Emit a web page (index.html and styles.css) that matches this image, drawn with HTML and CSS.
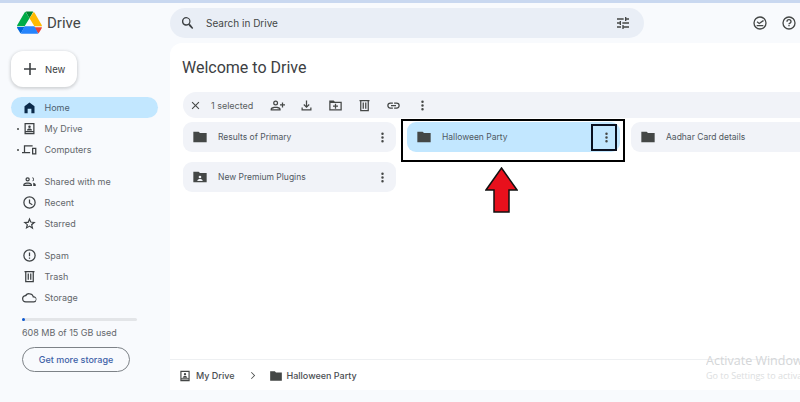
FILE: index.html
```html
<!DOCTYPE html>
<html lang="en">
<head>
<meta charset="utf-8">
<title>Drive</title>
<link rel="stylesheet" href="styles.css">
</head>
<body>
<div class="strip"></div>
<div class="app">
  <aside class="side">
    <div class="brand">
      <svg class="logo" viewBox="0 0 24 22" width="25" height="23">
        <path fill="#0066da" d="M1.8 18.9l1 1.8c.2.4.5.7.9.9l3.6-6.2H0c0 .4.1.8.3 1.2z"/>
        <path fill="#00ac47" d="M12 7L8.2.6c-.4.2-.7.5-.9.9L.3 13.3c-.2.4-.3.8-.3 1.2h7.3z"/>
        <path fill="#ea4335" d="M20.3 21.6c.4-.2.7-.5.9-.9l.4-.7 2-3.3c.2-.4.3-.8.3-1.2h-7.3l1.6 3z"/>
        <path fill="#00832d" d="M12 7l3.6-6.400c-.4-.2-.8-.2-1.200-.2H9.600c-.4 0-.8.100-1.200.2z"/>
        <path fill="#2684fc" d="M16.700 14.500H7.300l-3.600 7.100c.4.200.8.200 1.200.2h14.200c.4 0 .8-.1 1.200-.2z"/>
        <path fill="#ffba00" d="M20.200 7.500l-3.300-5.800c-.2-.4-.5-.7-.9-.9L12 7l4.700 7.500H24c0-.4-.1-.8-.3-1.200z"/>
      </svg>
      <span class="brand-name">Drive</span>
    </div>
    <button class="new-btn">
      <svg class="ic-plus" viewBox="0 0 12 12" width="12" height="12"><path d="M5.200 0h1.600v5.200H12v1.600H6.800V12H5.200V6.800H0V5.200h5.200z"/></svg>
      <span>New</span>
    </button>
    <nav class="nav">
      <a class="nav-item active"><svg class="ic" viewBox="0 0 24 24"><path d="M4 21V10l8-6 8 6v11h-5v-7H9v7z"/></svg><span>Home</span></a>
      <a class="nav-item"><i class="dot"></i><svg class="ic" viewBox="0 0 24 24"><path fill-rule="evenodd" d="M4 3h16v18H4zm2 2v11h12V5zm0 13v1h12v-1zM12 7a2 2 0 110 4 2 2 0 010-4zM8 15c0-2 2-3 4-3s4 1 4 3z"/></svg><span>My Drive</span></a>
      <a class="nav-item"><i class="dot"></i><svg class="ic" viewBox="0 0 24 24"><path fill-rule="evenodd" d="M3 5h14v2H5v9h8v2H0v-2h3zM16 9h7v11h-7zm2 2v7h3v-7z"/></svg><span>Computers</span></a>
      <div class="nav-gap"></div>
      <a class="nav-item"><svg class="ic" viewBox="0 0 24 24"><path fill-rule="evenodd" d="M9 5a3.500 3.500 0 110 7 3.500 3.500 0 010-7zm0 2a1.500 1.500 0 100 3 1.500 1.500 0 000-3zM2 19v-2c0-2.500 4-3.500 7-3.500s7 1 7 3.500v2zm2-2h10c-.3-1-3-1.500-5-1.500S4.300 16 4 17zM16 5a3.500 3.500 0 011 6.800V10a1.500 1.500 0 000-2.900zM18 14c2 .4 4 1.300 4 3v2h-4v-2c0-1.100-.2-2.100 0-3z"/></svg><span>Shared with me</span></a>
      <a class="nav-item"><svg class="ic" viewBox="0 0 24 24"><path fill-rule="evenodd" d="M12 2a10 10 0 110 20 10 10 0 010-20zm0 2a8 8 0 100 16 8 8 0 000-16zm-1 3h2v5.200l4 2.400-1 1.700-5-3z"/></svg><span>Recent</span></a>
      <a class="nav-item"><svg class="ic" viewBox="0 0 24 24"><path fill-rule="evenodd" d="M12 2.500l2.800 6.600 7.200.6-5.500 4.700 1.700 7L12 17l-6.200 3.900 1.700-7L2 9.700l7.200-.6zm0 5l-1.500 3.500-3.800.3 2.900 2.500-.9 3.700L12 15l3.300 2-.9-3.700 2.900-2.500-3.800-.3z"/></svg><span>Starred</span></a>
      <div class="nav-gap"></div>
      <a class="nav-item"><svg class="ic" viewBox="0 0 24 24"><path fill-rule="evenodd" d="M12 2a10 10 0 110 20 10 10 0 010-20zm0 2a8 8 0 100 16 8 8 0 000-16zm-1 3h2v6h-2zm0 8h2v2h-2z"/></svg><span>Spam</span></a>
      <a class="nav-item"><svg class="ic" viewBox="0 0 24 24"><path fill-rule="evenodd" d="M4 3h16v2h-1v16H5V5H4zm3 2v14h10V5zm2 2h2v10H9zm4 0h2v10h-2z"/></svg><span>Trash</span></a>
      <a class="nav-item"><svg class="ic" viewBox="0 0 24 24"><path fill-rule="evenodd" d="M12 5a7 7 0 016.700 5.100A5 5 0 0119 20H6a6 6 0 01-1-11.900A7.500 7.500 0 0112 5zm0 2a5.500 5.500 0 00-5.400 3H6a4 4 0 000 8h13a3 3 0 00.200-6h-2C17 9 15 7 12 7z"/></svg><span>Storage</span></a>
    </nav>
    <div class="quota"><div class="quota-fill"></div></div>
    <p class="quota-text">608 MB of 15 GB used</p>
    <button class="more-btn">Get more storage</button>
  </aside>
  <div class="col">
    <header class="top">
      <div class="search">
        <svg class="ic-search" viewBox="0 0 24 24"><path d="M15.500 14h-.800l-.300-.300A6.500 6.500 0 1013 15l.3.300v.8l5 5 1.500-1.500zm-6 0a4.500 4.500 0 110-9 4.500 4.500 0 010 9z"/></svg>
        <span class="search-text">Search in Drive</span>
        <svg class="ic-tune" viewBox="0 0 24 24"><path d="M3 17v2h6v-2zM3 5v2h10V5zm10 16v-2h8v-2h-8v-2h-2v6zM7 9v2H3v2h4v2h2V9zm14 4v-2H11v2zm-6-4h2V7h4V5h-4V3h-2z"/></svg>
      </div>
      <div class="top-icons">
        <svg class="ic-top" viewBox="0 0 24 24"><path fill-rule="evenodd" d="M12 2a10 10 0 110 20 10 10 0 010-20zm0 2a8 8 0 100 16 8 8 0 000-16zM7 15h10v2H7zm9.500-7.500L18 9l-7.200 5L7 11l1.300-1.500 2.500 2z"/></svg>
        <svg class="ic-top" viewBox="0 0 24 24"><path fill-rule="evenodd" d="M12 2a10 10 0 110 20 10 10 0 010-20zm0 2a8 8 0 100 16 8 8 0 000-16zm-1 11h2v2h-2zm1-9a4 4 0 014 4c0 2.500-3 2.800-3 4h-2c0-2.800 3-2.800 3-4a2 2 0 00-4 0H8a4 4 0 014-4z"/></svg>
      </div>
    </header>
    <main class="panel">
      <h1 class="title">Welcome to Drive</h1>
      <div class="toolbar">
        <svg class="tb tb-x" viewBox="0 0 24 24"><path d="M19 6.400L17.600 5 12 10.600 6.400 5 5 6.400 10.600 12 5 17.600 6.400 19 12 13.400 17.600 19 19 17.600 13.400 12z"/></svg>
        <span class="sel">1 selected</span>
        <svg class="tb" viewBox="0 0 24 24"><path fill-rule="evenodd" d="M9 4a4 4 0 110 8 4 4 0 010-8zm0 2a2 2 0 100 4 2 2 0 000-4zM1 20v-2.500C1 15 5.500 14 9 14s8 1 8 3.500V20zm2-2h12c-.2-1-3.500-2-6-2s-5.800 1-6 2zM19 7h2v3h3v2h-3v3h-2v-3h-3v-2h3z"/></svg>
        <svg class="tb" viewBox="0 0 24 24"><path d="M11 4h2v8.200l2.600-2.600L17 11l-5 5-5-5 1.400-1.400 2.600 2.600zM4 15h2v3h12v-3h2v5H4z"/></svg>
        <svg class="tb" viewBox="0 0 24 24"><path fill-rule="evenodd" d="M2 4h7l2 2h11v14H2zm2 4v10h16V8zm7 1h2v3h3v2h-3v3h-2v-3H8v-2h3z"/></svg>
        <svg class="tb" viewBox="0 0 24 24"><path fill-rule="evenodd" d="M4 3h16v2h-1v16H5V5H4zm3 2v14h10V5zm2 2h2v10H9zm4 0h2v10h-2z"/></svg>
        <svg class="tb" viewBox="0 0 24 24"><path d="M17 7h-4v2h4a3 3 0 010 6h-4v2h4a5 5 0 000-10zm-6 8H7a3 3 0 010-6h4V7H7a5 5 0 000 10h4zm-3-4h8v2H8z"/></svg>
        <svg class="tb" viewBox="0 0 24 24"><path d="M12 8a2 2 0 100-4 2 2 0 000 4zm0 2a2 2 0 100 4 2 2 0 000-4zm0 6a2 2 0 100 4 2 2 0 000-4z"/></svg>
      </div>
      <div class="grid">
        <div class="card">
          <svg class="folder" viewBox="0 0 24 24"><path d="M10 4H2v16h20V6H12z"/></svg>
          <span class="card-name">Results of Primary</span>
          <svg class="more" viewBox="0 0 24 24"><path d="M12 8a2 2 0 100-4 2 2 0 000 4zm0 2a2 2 0 100 4 2 2 0 000-4zm0 6a2 2 0 100 4 2 2 0 000-4z"/></svg>
        </div>
        <div class="card selected">
          <svg class="folder" viewBox="0 0 24 24"><path d="M10 4H2v16h20V6H12z"/></svg>
          <span class="card-name">Halloween Party</span>
          <svg class="more" viewBox="0 0 24 24"><path d="M12 8a2 2 0 100-4 2 2 0 000 4zm0 2a2 2 0 100 4 2 2 0 000-4zm0 6a2 2 0 100 4 2 2 0 000-4z"/></svg>
        </div>
        <div class="card">
          <svg class="folder" viewBox="0 0 24 24"><path d="M10 4H2v16h20V6H12z"/></svg>
          <span class="card-name">Aadhar Card details</span>
        </div>
        <div class="card">
          <svg class="folder" viewBox="0 0 24 24"><path fill-rule="evenodd" d="M10 4H2v16h20V6H12zm2 6a2 2 0 110 4 2 2 0 010-4zm-4 8c0-2 2-3 4-3s4 1 4 3z"/></svg>
          <span class="card-name">New Premium Plugins</span>
          <svg class="more" viewBox="0 0 24 24"><path d="M12 8a2 2 0 100-4 2 2 0 000 4zm0 2a2 2 0 100 4 2 2 0 000-4zm0 6a2 2 0 100 4 2 2 0 000-4z"/></svg>
        </div>
      </div>
      <div class="crumbs">
        <svg class="cr-ic" viewBox="0 0 24 24"><path fill-rule="evenodd" d="M4 3h16v18H4zm2 2v11h12V5zm0 13v1h12v-1zM12 7a2 2 0 110 4 2 2 0 010-4zM8 15c0-2 2-3 4-3s4 1 4 3z"/></svg>
        <span class="cr-text">My Drive</span>
        <svg class="cr-chev" viewBox="0 0 24 24"><path d="M8 4l1.500-1.500L19 12l-9.500 9.500L8 20l8-8z"/></svg>
        <svg class="cr-ic" viewBox="0 0 24 24"><path d="M10 4H2v16h20V6H12z"/></svg>
        <span class="cr-text">Halloween Party</span>
      </div>
    </main>
  </div>
</div>
<div class="mark-box"></div>
<div class="mark-small"></div>
<svg class="mark-arrow" viewBox="0 0 33 46" width="33" height="46"><path d="M16.500 1L32 23h-8v22H9V23H1z"/></svg>
<div class="watermark">
  <div class="wm-1">Activate Windows</div>
  <div class="wm-2">Go to Settings to activate Windows.</div>
</div>
</body>
</html>
```
FILE: styles.css
```css
* { box-sizing: border-box; }
html, body { margin: 0; height: 100%; }
body {
  width: 800px; height: 402px; overflow: hidden; position: relative;
  background: #f8fafd; color: #444746;
  font-family: "Inter", "Roboto", "Liberation Sans", sans-serif;
}
.strip { height: 3px; background: #c9d8f0; }
.app { display: flex; height: 399px; }

.side { width: 170px; flex: none; padding-left: 11px; display: flex; flex-direction: column; }
.brand { display: flex; align-items: center; height: 36px; padding: 3px 0 0 6px; gap: 5px; }
.logo { flex: none; }
.brand-name { font: 400 15px "Roboto", sans-serif; color: #444746; }
.new-btn {
  width: 66px; height: 36px; margin: 12px 0 0 0; padding: 0 0 0 13px;
  display: flex; align-items: center; gap: 9px;
  border: 0; border-radius: 12px; background: #fff;
  box-shadow: 0 1px 3px 1px rgba(60,64,67,.2);
  font: 400 9.500px "Inter", sans-serif; color: #3c4043;
}
.ic-plus { fill: #3c4043; flex: none; }
.nav { display: flex; flex-direction: column; margin-top: 10px; }
.nav-item {
  width: 147px; height: 21px; flex: none; position: relative;
  display: flex; align-items: center; gap: 8px; padding-left: 10.500px;
  border-radius: 11px; font-size: 9px; color: #63676b;
}
.nav-item.active { background: #c2e7ff; color: #4d5f70; }
.nav-item.active .ic { fill: #0b2a4a; }
.nav-gap { height: 11px; flex: none; }
.ic { width: 15px; height: 15px; fill: #3c4043; flex: none; }
.dot { position: absolute; left: 6px; top: 10px; width: 2px; height: 2px; border-radius: 50%; background: #444746; }
.quota { width: 115px; height: 3px; margin: 10px 0 0 11px; background: #e3e5e8; border-radius: 2px; }
.quota-fill { width: 3px; height: 3px; background: #0b57d0; border-radius: 2px; }
.quota-text { margin: 6px 0 0 11px; font-size: 9px; color: #63676b; line-height: 12px; }
.more-btn {
  width: 108px; height: 25px; margin: 8px 0 0 11px; padding: 0;
  background: transparent; border: 1px solid #7d8287; border-radius: 13px;
  font: 500 9px "Inter", sans-serif; color: #3f62a8;
}

.col { flex: 1; min-width: 0; display: flex; flex-direction: column; }
.top { height: 40px; flex: none; display: flex; align-items: flex-start; padding-top: 5px; }
.search {
  width: 474px; height: 30px; border-radius: 15px; background: #e9eef6;
  display: flex; align-items: center; padding: 0 13px 0 10px;
}
.ic-search { width: 16px; height: 16px; fill: #3c4043; flex: none; }
.search-text { margin-left: 10px; font-size: 10px; color: #444746; flex: 1; }
.ic-tune { width: 16px; height: 16px; fill: #444746; flex: none; }
.top-icons { display: flex; gap: 13px; margin-left: 108px; padding-top: 7px; }
.ic-top { width: 16px; height: 16px; fill: #444746; flex: none; }

.panel {
  height: 347px; flex: none; background: #fff; border-radius: 12px 0 0 0;
  display: flex; flex-direction: column; padding-left: 13px; overflow: hidden;
}
.title { margin: 15px 0 0 -1px; font: 400 16px/20px "Roboto", sans-serif; color: #3c4043; }
.toolbar {
  height: 26px; margin-top: 14px; background: #f1f3f8; border-radius: 13px 0 0 13px;
  display: flex; align-items: center; padding-left: 6px; flex: none;
}
.tb { width: 15px; height: 15px; fill: #444746; flex: none; margin-right: 14px; }
.tb-x { width: 13px; height: 13px; margin-right: 9px; }
.sel { font-size: 9px; color: #5a5e60; width: 59px; flex: none; }
.grid { display: grid; grid-template-columns: 213px 213px 213px; gap: 10px 11px; margin-top: 4px; }
.card {
  height: 30px; border-radius: 9px; background: #f1f3f8;
  display: flex; align-items: center; padding: 0 6px 0 9px;
}
.card.selected { background: #c2e7ff; }
.folder { width: 16px; height: 16px; fill: #444746; flex: none; }
.card-name { margin-left: 10px; flex: 1; font-size: 8.500px; color: #50585f; white-space: nowrap; }
.more { width: 15px; height: 15px; fill: #444746; flex: none; }

.crumbs {
  margin: auto 0 0 -13px; height: 31px; flex: none; border-top: 1px solid #eef0f2;
  display: flex; align-items: center; padding: 1px 0 0 8px;
}
.cr-ic { width: 14px; height: 14px; fill: #444746; flex: none; }
.cr-text { font-size: 9px; font-weight: 500; color: #4a4e52; margin-left: 4px; }
.cr-chev { width: 9px; height: 9px; fill: #444746; flex: none; margin: 0 12px 0 13px; }

.mark-box { position: absolute; left: 401px; top: 119px; width: 224px; height: 43px; border: 2px solid #000; }
.mark-small { position: absolute; left: 591px; top: 124px; width: 26px; height: 27px; border: 2px solid #0a1020; }
.mark-arrow { position: absolute; left: 485px; top: 167px; fill: #e8101c; stroke: #111; stroke-width: 1.500; }

.watermark { position: absolute; left: 706px; top: 353px; width: 94px; overflow: hidden; white-space: nowrap; pointer-events: none; }
.wm-1 { font: 400 12.500px/16px "Open Sans", sans-serif; color: #d4d6d8; }
.wm-2 { font: 400 9px/13px "Open Sans", sans-serif; color: #dcdee0; }
```
